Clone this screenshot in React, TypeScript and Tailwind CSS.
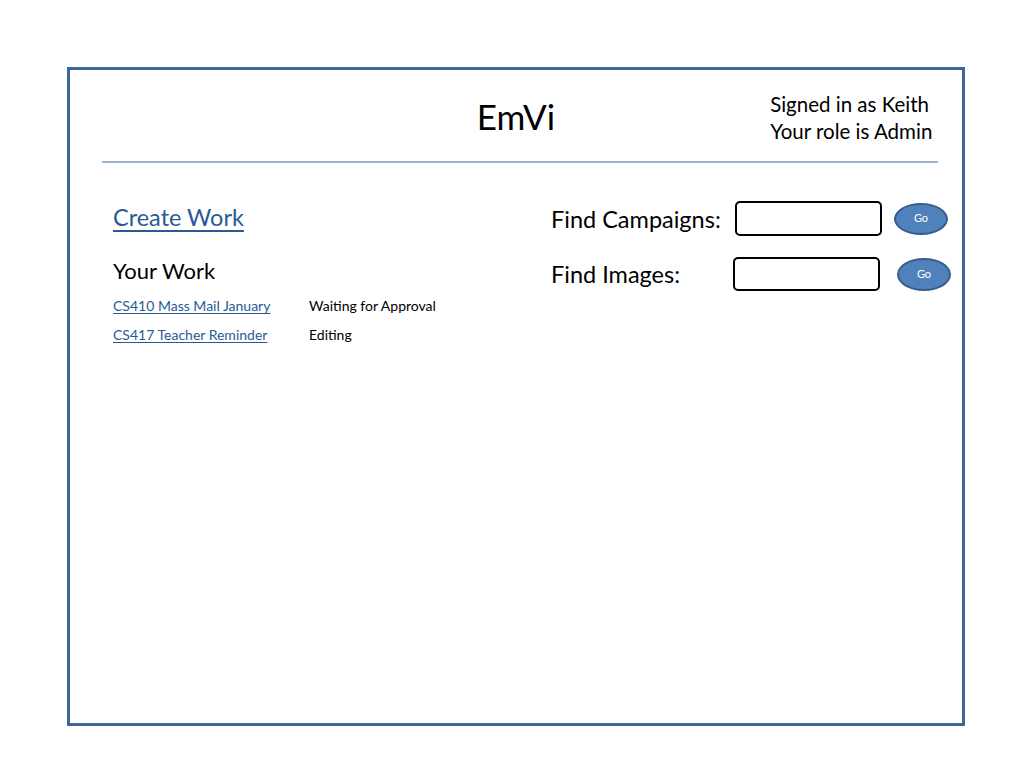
export default function App() {
  const work = [
    { name: "CS410 Mass Mail January", status: "Waiting for Approval" },
    { name: "CS417 Teacher Reminder", status: "Editing" },
  ];

  return (
    <div className="w-[1024px] h-[768px] bg-white pt-[67px] pl-[67px] font-['Lato',sans-serif] text-black">
      <div className="w-[898px] h-[659px] border-[3px] border-[#41659a] flex flex-col">
        {/* header */}
        <div className="grid grid-cols-[1fr_auto_1fr] h-[91px]">
          <div />
          <div className="pt-[25px] text-[35px] leading-[42px]">EmVi</div>
          <div className="pt-[21px] pl-[215px] text-[20.5px] leading-[27px] whitespace-nowrap">
            <div>Signed in as Keith</div>
            <div>Your role is Admin</div>
          </div>
        </div>
        <div className="ml-[32px] mr-[24px] h-[2px] bg-[#9db2cc]" />

        {/* body */}
        <div className="flex pt-[39px] pl-[43px]">
          <div className="w-[438px]">
            <a href="#" className="block text-[23.5px] leading-[30px] text-[#2a5a93] underline underline-offset-[4px] decoration-[1.5px]">
              Create Work
            </a>
            <div className="mt-[24px] text-[22px] leading-[30px]">Your Work</div>
            <div className="mt-[10px] flex flex-col gap-[9px]">
              {work.map((w) => (
                <div key={w.name} className="flex text-[14px] leading-[20px]">
                  <a href="#" className="w-[196px] text-[#2a5a93] underline underline-offset-2">
                    {w.name}
                  </a>
                  <span>{w.status}</span>
                </div>
              ))}
            </div>
          </div>

          <div className="flex flex-col gap-[21px] -mt-[1px]">
            <div className="flex items-center">
              <span className="w-[184px] text-[23.5px] leading-[30px]">Find Campaigns:</span>
              <div className="w-[147px] h-[35px] border-[2.5px] border-black rounded-[5px]" />
              <button className="ml-[12px] w-[54px] h-[32px] rounded-[50%] bg-[#4f81bd] border-2 border-[#385d8a] text-white text-[11px]">
                Go
              </button>
            </div>
            <div className="flex items-center">
              <span className="w-[182px] text-[23.5px] leading-[30px]">Find Images:</span>
              <div className="w-[147px] h-[34px] border-[2.5px] border-black rounded-[5px]" />
              <button className="ml-[17px] w-[54px] h-[33px] rounded-[50%] bg-[#4f81bd] border-2 border-[#385d8a] text-white text-[11px]">
                Go
              </button>
            </div>
          </div>
        </div>
      </div>
    </div>
  );
}
